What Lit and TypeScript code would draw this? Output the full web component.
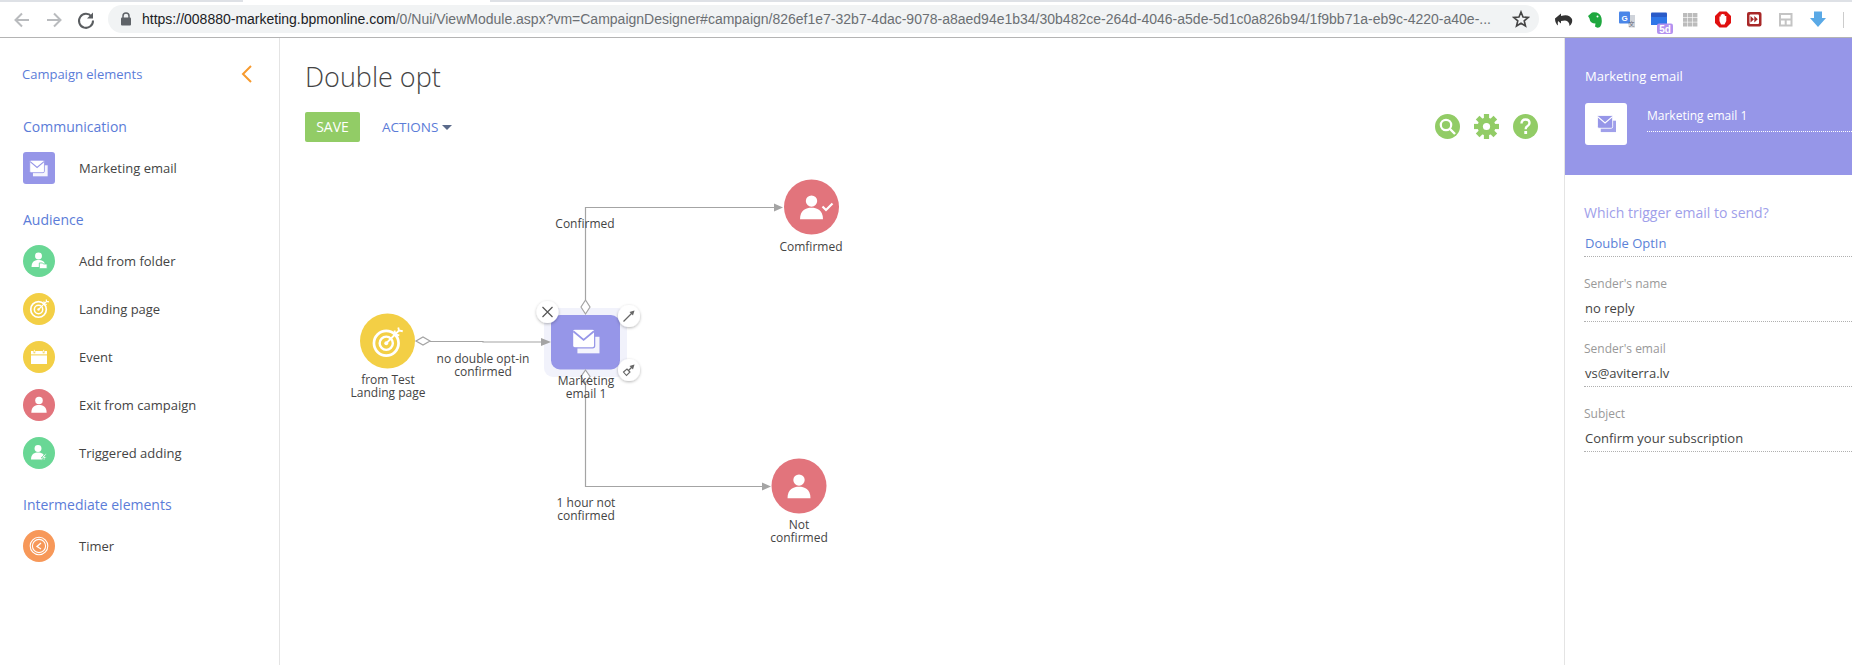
import { LitElement, html, css, svg, unsafeCSS } from "lit";
import { customElement } from "lit/decorators.js";

const FONT = unsafeCSS(`"Open Sans", "Noto Sans", sans-serif`);

// glyph helpers, all drawn around a 0,0 centre
const person = (s = 1) => svg`<g transform="scale(${s})" fill="#fff"><circle cx="0" cy="-5.5" r="4.2"/><path d="M-8.5 8 C-8.5 1 -4 -.5 0 -.5 C4 -.5 8.5 1 8.5 8 Z"/></g>`;
const envelope = (s = 1, c = "#fff", b = "#9696e8") => svg`<g transform="scale(${s})">
  <path d="M-5.5 -3.5 H10.5 V8.5 H-5.5 Z" fill="${c}" opacity=".9"/>
  <path d="M-9 -7.5 Q-9 -9 -7.5 -9 H5.5 Q7 -9 7 -7.5 V3 Q7 4.5 5.5 4.5 H-7.5 Q-9 4.5 -9 3 Z" fill="${c}" stroke="${b}" stroke-width=".9"/>
  <path d="M-8.5 -7.5 L-1 -1.2 L6.5 -7.5" fill="none" stroke="${b}" stroke-width="1.3"/></g>`;
const target = (s = 1) => svg`<g transform="scale(${s})" fill="none" stroke="#fff">
  <circle cx="-.5" cy=".5" r="8.2" stroke-width="1.8"/><circle cx="-.5" cy=".5" r="4.4" stroke-width="1.6"/>
  <circle cx="-.5" cy=".5" r="1.3" fill="#fff" stroke="none"/>
  <path d="M-.5 .5 L8 -8 M5 -8 L5.6 -5.4 L8.2 -4.8 M7.5 -10 L8 -8 L10.5 -7.5" stroke-width="1.2"/></g>`;

const ICON_MAIL = svg`<g transform="translate(15 16.5) scale(.92)">${envelope(1, "#fff", "#9696e8")}</g>`;
const ICON_FOLDER = svg`<g transform="translate(15.5 15.5) scale(.82)">${person()}<path d="M1 3 H5 L6 4.2 H10.5 V10 H1 Z" fill="#fff" stroke="#69d795" stroke-width="1.1"/></g>`;
const ICON_TARGET = svg`<g transform="translate(16 16)">${target(.95)}</g>`;
const ICON_EVENT = svg`<g transform="translate(16 16)"><rect x="-8" y="-6" width="16" height="13" fill="#fff"/><rect x="-8" y="-2.6" width="16" height="1" fill="#f3cf45"/><rect x="-5.2" y="-7.5" width="1.2" height="3.5" fill="#fff" stroke="#f3cf45" stroke-width=".5"/><rect x="4" y="-7.5" width="1.2" height="3.5" fill="#fff" stroke="#f3cf45" stroke-width=".5"/></g>`;
const ICON_EXIT = svg`<g transform="translate(16 16.5) scale(.9)">${person()}</g>`;
const ICON_TRIG = svg`<g transform="translate(15 16) scale(.82)">${person()}<path d="M9 .8 L4 6 H7 L4 10.5 L11 4.5 H8 L10.5 .8 Z" fill="#fff" stroke="#69d795" stroke-width="1.1"/></g>`;
const ICON_TIMER = svg`<g transform="translate(16 16)" fill="none" stroke="#fff"><circle r="8.8" stroke-width="1.1"/><circle r="6.6" stroke-width="1.1"/><path d="M2 -3 L-2 .5 L2 3" stroke-width="1.3"/></g>`;

interface Item { label: string; bg: string; square?: boolean; icon: unknown; }
interface Group { title: string; items: Item[]; }

const GROUPS: Group[] = [
  { title: "Communication", items: [{ label: "Marketing email", bg: "#9696e8", square: true, icon: ICON_MAIL }] },
  { title: "Audience", items: [
    { label: "Add from folder", bg: "#69d795", icon: ICON_FOLDER },
    { label: "Landing page", bg: "#f3cf45", icon: ICON_TARGET },
    { label: "Event", bg: "#f3cf45", icon: ICON_EVENT },
    { label: "Exit from campaign", bg: "#e2747c", icon: ICON_EXIT },
    { label: "Triggered adding", bg: "#69d795", icon: ICON_TRIG },
  ] },
  { title: "Intermediate elements", items: [{ label: "Timer", bg: "#f79859", icon: ICON_TIMER }] },
];

const FIELDS = [
  { label: "Sender's name", value: "no reply" },
  { label: "Sender's email", value: "vs@aviterra.lv" },
  { label: "Subject", value: "Confirm your subscription" },
];

const URL_A = "https://008880-marketing.bpmonline.com";
const URL_B = "/0/Nui/ViewModule.aspx?vm=CampaignDesigner#campaign/826ef1e7-32b7-4dac-9078-a8aed94e1b34/30b482ce-264d-4046-a5de-5d1c0a826b94/1f9bb71a-eb9c-4220-a40e-...";

const EXTS = [
  svg`<path d="M8 13.5 L14 8.5 V11 Q22 8.5 25 14 Q26 18 22.5 21 Q22.5 16 18 15.5 L14 16 V18.5 L11 16 Q10.5 18 11 20.5 Q8 18 8 13.5 Z" fill="#333"/>`,
  svg`<path d="M9 11 L13 7.5 Q21 6.5 22.5 13 Q23.5 19 21 22 Q18 23.5 16 21.5 L16.5 18.5 Q11 18.5 10.5 13.5 Z" fill="#1fa83f"/><circle cx="18.5" cy="11.5" r="1" fill="#fff"/>`,
  svg`<path d="M15 10 H24 V22.5 H18 Z" fill="#cfd3da"/><rect x="8" y="6.5" width="11" height="12" rx="1" fill="#4a86e8"/><text x="13.5" y="15.5" font-size="8" font-family="Liberation Sans" font-weight="700" fill="#fff" text-anchor="middle">G</text><text x="20.5" y="21" font-size="6" font-family="Noto Sans CJK SC" fill="#667" text-anchor="middle">文</text>`,
  svg`<rect x="8" y="7.5" width="16" height="5" rx="1" fill="#2a5bc8"/><rect x="8" y="12" width="16" height="8" fill="#2f76e8"/><rect x="14" y="18.5" width="16" height="10.5" rx="2" fill="#b392f0"/><text x="22" y="27.5" font-size="10" font-family="Liberation Sans" font-weight="700" fill="#fff" text-anchor="middle">5d</text>`,
  svg`<g fill="#bcbcbc">${[8, 13, 18].map((x) => [8, 12.7, 17.4].map((y) => svg`<rect x=${x} y=${y} width="4.4" height="4.1"/>`))}</g>`,
  svg`<path d="M12.5 6.5 H19.5 L24 11 V18 L19.5 22.5 H12.5 L8 18 V11 Z" fill="#e01010"/><path d="M12.5 11.5 H13.7 V9.5 H15 V9 H16.5 V9.5 H17.8 V11 H19.3 V16 L17.5 19.5 H14 L12.5 16 Z" fill="#fff"/>`,
  svg`<rect x="8" y="7" width="14.5" height="14.5" rx="2" fill="#a82828"/><rect x="10.5" y="9.5" width="9.5" height="9.5" rx="1" fill="#fff"/><path d="M11.5 11 L15 14.2 L11.5 17.5 Z M15.3 11 L18.8 14.2 L15.3 17.5 Z" fill="#a82828"/>`,
  svg`<rect x="9" y="9" width="11.5" height="11.5" fill="none" stroke="#c4c4c4" stroke-width="2"/><path d="M9 14.5 H20.5 M14.7 14.5 V20.5" stroke="#c4c4c4" stroke-width="2"/>`,
];

@customElement("app-root")
export class AppRoot extends LitElement {
  static styles = css`
    :host { display: block; width: 1852px; height: 665px; overflow: hidden; background: #fff; font-family: ${FONT}; color: #444; }
    .page { display: flex; flex-direction: column; height: 665px; }
    .tabs { height: 2px; flex: none; background: #dee1e6; display: flex; padding-left: 243px; }
    .tabs i { display: block; width: 247px; background: #fff; }
    .toolbar { flex: none; height: 36px; box-sizing: border-box; display: flex; align-items: center; background: #fff; border-bottom: 1px solid #b4b4b4; }
    .nav { flex: none; width: 108px; display: flex; padding-left: 12px; box-sizing: border-box; gap: 12px; }
    .nav svg { display: block; }
    .omni { flex: none; width: 1431px; height: 28px; margin-top: -2px; box-sizing: border-box; border-radius: 14px; background: #f1f3f4; display: flex; align-items: center; padding: 0 9px 0 13px; }
    .lock { flex: none; margin-right: 11px; display: block; }
    .url { flex: 1; min-width: 0; white-space: nowrap; overflow: hidden; font: 14px/28px "Liberation Sans", Arial, sans-serif; color: #6b6f73; }
    .url b { font-weight: 400; color: #202124; }
    .star { flex: none; display: block; }
    .exts { flex: none; display: flex; margin-left: 8px; margin-top: 0; }
    .exts svg { display: block; }
    .main { flex: 1; min-height: 0; display: flex; }
    .side { flex: none; width: 280px; box-sizing: border-box; border-right: 1px solid #e4e4e4; padding: 26px 0 0 23px; }
    .side-head { display: flex; justify-content: space-between; align-items: center; height: 20px; padding-right: 27px; margin-left: -1px; }
    .side-head span { font-size: 13px; color: #5b7cd8; }
    .side-head svg { display: block; }
    .group { font-size: 14px; font-weight: 400; line-height: 20px; color: #5b7cd8; margin: 0; }
    .g0 { margin-top: 33px; }
    .g1 { margin-top: 26px; }
    .g2 { margin-top: 26px; }
    .item { display: flex; align-items: center; height: 32px; margin-top: 16px; font-size: 13px; color: #444; }
    .group + .item { margin-top: 15px; }
    .item svg { display: block; flex: none; margin-right: 24px; }
    .canvas { flex: 1; min-width: 0; position: relative; }
    .diagram { position: absolute; left: 0; top: 0; display: block; }
    .diagram text { font-family: ${FONT}; font-size: 12px; fill: #444; text-anchor: middle; }
    .head { position: relative; padding: 17px 0 0 25px; }
    .head h1 { margin: 0; font-size: 27px; line-height: 44px; font-weight: 300; color: #444; }
    .bar { display: flex; align-items: center; margin-top: 13px; }
    .save { width: 55px; height: 30px; box-sizing: border-box; border: 0; border-radius: 2px; background: #92cc66; color: #fff; font: 400 14px/30px ${FONT}; padding: 0; }
    .actions { margin-left: 22px; display: flex; align-items: center; gap: 4px; font-size: 13.5px; color: #5b7cd8; }
    .caret { width: 0; height: 0; border: 5px solid transparent; border-top-color: #5a6a8a; border-bottom: 0; }
    .tools { position: absolute; left: 1155px; top: 76px; display: flex; gap: 14px; }
    .tools svg { display: block; }
    .panel { flex: none; width: 288px; box-sizing: border-box; border-left: 1px solid #e4e4e4; }
    .phead { height: 137px; box-sizing: border-box; background: #9696e8; color: #fff; padding: 28px 0 0 20px; }
    .phead .t { font-size: 13px; line-height: 20px; }
    .prow { display: flex; margin-top: 17px; }
    .pico { flex: none; width: 42px; height: 42px; border-radius: 3px; background: #fff; display: flex; align-items: center; justify-content: center; }
    .pico svg { display: block; }
    .pname { flex: 1; margin-left: 20px; height: 28px; line-height: 26px; font-size: 12px; border-bottom: 1px dotted #fff; }
    .pbody { padding: 28px 0 0 19px; }
    .q { font-size: 14px; line-height: 20px; color: #a0a0ea; }
    .val { box-sizing: border-box; padding: 0 0 0 1px; line-height: 22px; font-size: 13px; color: #444; border-bottom: 1px dotted #b0b0b0; }
    .val.link { color: #5b82d8; margin-top: 9px; height: 25px; }
    .val.plain { margin-top: 5px; height: 25px; }
    .lab { font-size: 12px; line-height: 16px; color: #999; margin-top: 19px; }
  `;

  private ext(w: number, body: unknown) {
    return html`<svg width=${w} height="30" viewBox="0 0 ${w} 30">${body}</svg>`;
  }

  private node(cx: number, cy: number, color: string, icon: unknown) {
    return svg`<g transform="translate(${cx} ${cy})"><circle r="27.5" fill=${color}/>${icon}</g>`;
  }

  private handle(cx: number, cy: number, r: number, icon: unknown) {
    return svg`<g transform="translate(${cx} ${cy})"><circle r=${r} fill="#fff" filter="url(#sh)"/>${icon}</g>`;
  }

  private diagram() {
    const line = "#a4a4a4";
    return html`<svg class="diagram" width="1284" height="627" viewBox="280 38 1284 627">
      <defs>
        <filter id="sh" x="-30%" y="-30%" width="160%" height="160%"><feDropShadow dx="0" dy="1" stdDeviation="1.4" flood-color="#000" flood-opacity=".3"/></filter>
      </defs>
      <g fill="none" stroke=${line} stroke-width="1.2">
        <path d="M430 341.5 H483 V342 H543"/>
        <path d="M585.5 300 V207.5 H775"/>
        <path d="M585.5 383 V486.5 H763"/>
        <path d="M416 341 L423 337 L430 341 L423 345 Z" fill="#fff"/>
      </g>
      <g fill=${line}>
        <path d="M774 203.5 L783 207.5 L774 211.5 Z"/>
        <path d="M762 482.5 L771 486.5 L762 490.5 Z"/>
      </g>
      ${this.node(387.5, 341, "#f3cf45", svg`<g transform="translate(-.5 1.5)">${target(1.5)}</g>`)}
      ${this.node(811.5, 207, "#e2747c", svg`<g transform="translate(0 1.5) scale(1.35)">${person()}</g>
        <path d="M11 -.5 L14.5 3 L21 -3.5" fill="none" stroke="#fff" stroke-width="2.2"/>`)}
      ${this.node(799, 486, "#e2747c", svg`<g transform="translate(0 1.5) scale(1.35)">${person()}</g>`)}

      <rect x="544" y="308" width="83" height="69" rx="9" fill="#f1f2fb"/>
      <path d="M541 338 L551 342 L541 346 Z" fill=${line}/>
      <rect x="551" y="315" width="69" height="54.5" rx="9" fill="#9696e8"/>
      <g transform="translate(585 341.6)">${envelope(1.38, "#fff", "#9696e8")}</g>
      <path d="M585.5 300 L590 307 L585.5 314 L581 307 Z" fill="#fff" stroke=${line} stroke-width="1.2"/>
      <path d="M585.5 370 L590 376.5 L585.5 383 L581 376.5 Z" fill="#fff" stroke=${line} stroke-width="1.2"/>
      ${this.handle(547.5, 312, 11, svg`<path d="M-5 -5 L5 5 M5 -5 L-5 5" stroke="#555" stroke-width="1.2" fill="none"/>`)}
      ${this.handle(629, 316, 11, svg`<path d="M-5.5 5.5 L3 -3" stroke="#666" stroke-width="1.2"/><path d="M5.5 -5.5 L.5 -4 L4 -.5 Z" fill="#666"/>`)}
      ${this.handle(629, 370, 11, svg`<path d="M-1 1 L3 -3" stroke="#666" stroke-width="1.2"/><path d="M5.5 -5.5 L.5 -4 L4 -.5 Z" fill="#666"/><path d="M-5.5 2 L-2 -1 L1 2 L-2.5 5.5 Z" fill="none" stroke="#666" stroke-width="1.1"/>`)}

      <text x="585" y="228">Confirmed</text>
      <text x="811" y="251">Comfirmed</text>
      <text x="483" y="363">no double opt-in</text>
      <text x="483" y="376">confirmed</text>
      <text x="388" y="384">from Test</text>
      <text x="388" y="397">Landing page</text>
      <text x="586" y="385">Marketing</text>
      <text x="586" y="398">email 1</text>
      <text x="586" y="507">1 hour not</text>
      <text x="586" y="520">confirmed</text>
      <text x="799" y="529">Not</text>
      <text x="799" y="542">confirmed</text>
    </svg>`;
  }

  render() {
    const G = "#92cc66";
    return html`<div class="page">
      <div class="tabs"><i></i></div>
      <div class="toolbar">
        <div class="nav">
          <svg width="20" height="20" viewBox="0 0 20 20"><path d="M17 10 H4 M10 3.5 L3.5 10 L10 16.5" fill="none" stroke="#b9bbbe" stroke-width="2"/></svg>
          <svg width="20" height="20" viewBox="0 0 20 20"><path d="M3 10 H16 M10 3.5 L16.5 10 L10 16.5" fill="none" stroke="#b9bbbe" stroke-width="2"/></svg>
          <svg width="20" height="20" viewBox="0 0 20 20"><path d="M15.5 6.5 A7 7 0 1 0 17 10.5" fill="none" stroke="#5a5d60" stroke-width="2"/><path d="M17 2.5 V8.5 H11 Z" fill="#5a5d60"/></svg>
        </div>
        <div class="omni">
          <svg class="lock" width="10" height="14" viewBox="0 0 10 14"><path d="M2 6 V4 A3 3 0 0 1 8 4 V6" fill="none" stroke="#5f6368" stroke-width="1.5"/><rect x="0" y="5.5" width="10" height="8" rx="1" fill="#5f6368"/></svg>
          <span class="url"><b>${URL_A}</b>${URL_B}</span>
          <svg class="star" width="18" height="18" viewBox="0 0 18 18"><path d="M9 2 L11 7 L16.3 7.4 L12.2 10.8 L13.5 16 L9 13.2 L4.5 16 L5.8 10.8 L1.7 7.4 L7 7 Z" fill="none" stroke="#444" stroke-width="1.6"/></svg>
        </div>
        <div class="exts">
          ${EXTS.map((e) => this.ext(32, e))}
          ${this.ext(40, svg`<path d="M11 6.5 H19 V13 H23 L15 22 L7 13 H11 Z" fill="#5aa9e6"/>`)}
          <svg width="2" height="30" viewBox="0 0 2 30"><rect x="0" y="7" width="1" height="16" fill="#ccc"/></svg>
        </div>
      </div>
      <div class="main">
        <aside class="side">
          <div class="side-head"><span>Campaign elements</span>
            <svg width="11" height="18" viewBox="0 0 11 18"><path d="M10 1 L2 9 L10 17" fill="none" stroke="#f79a2e" stroke-width="2"/></svg></div>
          ${GROUPS.map((g, i) => html`<h2 class="group g${i}">${g.title}</h2>
            ${g.items.map((it) => html`<div class="item">
              <svg width="32" height="32" viewBox="0 0 32 32">
                ${it.square ? svg`<rect width="32" height="32" rx="3" fill=${it.bg}/>` : svg`<circle cx="16" cy="16" r="16" fill=${it.bg}/>`}
                ${it.icon}
              </svg><span>${it.label}</span></div>`)}`)}
        </aside>
        <section class="canvas">
          ${this.diagram()}
          <div class="head">
            <h1>Double opt</h1>
            <div class="bar"><button class="save">SAVE</button><div class="actions">ACTIONS<i class="caret"></i></div></div>
          </div>
          <div class="tools">
            <svg width="25" height="25" viewBox="0 0 25 25"><circle cx="12.5" cy="12.5" r="12.5" fill=${G}/><circle cx="11" cy="11" r="5.2" fill="none" stroke="#fff" stroke-width="2.2"/><path d="M15 15 L20 20" stroke="#fff" stroke-width="2.4"/></svg>
            <svg width="25" height="25" viewBox="0 0 25 25"><g transform="translate(12.5 12.5)" fill=${G}><circle r="9"/>${[0, 45, 90, 135, 180, 225, 270, 315].map((a) => svg`<rect x="-2.6" y="-12.5" width="5.2" height="5" transform="rotate(${a})"/>`)}<circle r="3.6" fill="#fff"/></g></svg>
            <svg width="25" height="25" viewBox="0 0 25 25"><circle cx="12.5" cy="12.5" r="12.5" fill=${G}/><path d="M8.5 9.5 Q8.5 5.5 12.5 5.5 Q16.5 5.5 16.5 9 Q16.5 11 14.3 12.3 Q12.7 13.2 12.7 15.2" fill="none" stroke="#fff" stroke-width="2.4"/><rect x="11.3" y="17" width="2.8" height="3" fill="#fff"/></svg>
          </div>
        </section>
        <aside class="panel">
          <div class="phead">
            <div class="t">Marketing email</div>
            <div class="prow">
              <div class="pico"><svg width="22" height="20" viewBox="-11 -10 22 20">${envelope(.95, "#9696e8", "#fff")}</svg></div>
              <div class="pname">Marketing email 1</div>
            </div>
          </div>
          <div class="pbody">
            <div class="q">Which trigger email to send?</div>
            <div class="val link">Double OptIn</div>
            ${FIELDS.map((f) => html`<div class="lab">${f.label}</div><div class="val plain">${f.value}</div>`)}
          </div>
        </aside>
      </div>
    </div>`;
  }
}
